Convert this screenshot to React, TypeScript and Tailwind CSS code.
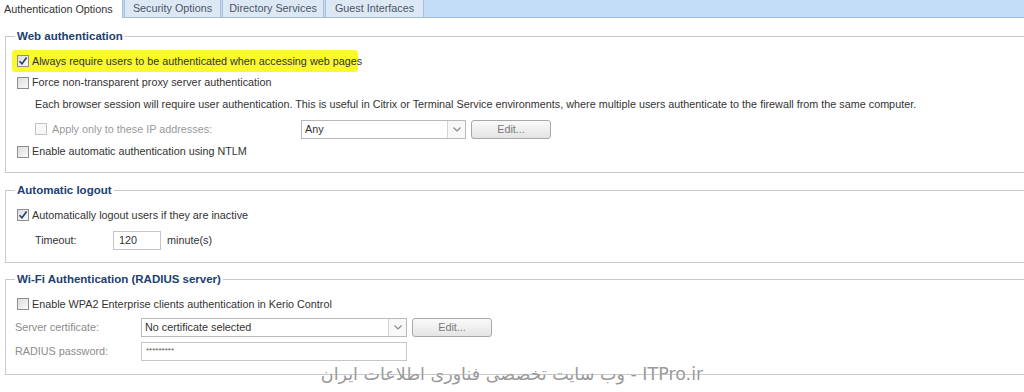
import React from "react";

const font = { fontFamily: '"Liberation Sans", Arial, sans-serif' };

function Check({ checked = false, disabled = false }: { checked?: boolean; disabled?: boolean }) {
  return (
    <span
      className={
        "inline-flex items-center justify-center w-[12px] h-[12px] border shrink-0 " +
        (disabled ? "border-[#c4c4c4] bg-[#f7f7f7]" : "border-[#8e8e8e] bg-gradient-to-br from-[#dcdcdc] to-[#fafafa]")
      }
    >
      {checked && (
        <svg width="10" height="10" viewBox="0 0 10 10">
          <path d="M1.5 5.2 L4 7.8 L8.6 1.6" fill="none" stroke="#2b3f66" strokeWidth="1.6" />
        </svg>
      )}
    </span>
  );
}

function Select({ value, w }: { value: string; w: string }) {
  return (
    <div className={"flex h-[19px] border border-[#b9b9b9] bg-white " + w}>
      <div className="flex-1 flex items-center pl-[3px] text-[#333]">{value}</div>
      <div className="w-[18px] flex items-center justify-center border-l border-[#d4d4d4] bg-[#f8f8f8]">
        <svg width="8" height="5" viewBox="0 0 8 5">
          <path d="M0.5 0.5 L4 4 L7.5 0.5" fill="none" stroke="#8a8a8a" strokeWidth="1.2" />
        </svg>
      </div>
    </div>
  );
}

function EditBtn() {
  return (
    <button className="ml-[5px] h-[19px] w-[80px] rounded-[3px] border border-[#a8a8a8] bg-gradient-to-b from-[#fafafa] to-[#e4e4e4] text-[#7a7a7a]">
      Edit...
    </button>
  );
}

function Legend({ children }: { children: React.ReactNode }) {
  return (
    <legend className="ml-[9px] px-[2px] text-[11.5px] font-bold text-[#20406f] leading-[14px]">{children}</legend>
  );
}

export default function App() {
  const tabs = [
    { t: "Security Options", w: "w-[97px]" },
    { t: "Directory Services", w: "w-[102px]" },
    { t: "Guest Interfaces", w: "w-[99px]" },
  ];
  return (
    <div className="relative w-[1024px] h-[392px] overflow-hidden bg-white text-[10.8px] text-[#333]" style={font}>
      {/* Tab strip */}
      <div className="flex h-[18px] bg-[#c3ddf9] border-b border-[#a5bcd6] whitespace-nowrap">
        <div className="w-[123px] h-[18px] bg-white flex items-center pl-[4px] text-[#333] border-r border-[#a9c0dc]">
          Authentication Options
        </div>
        {tabs.map((x) => (
          <div
            key={x.t}
            className={
              "h-[17px] ml-[1px] bg-[#dde8f5] border-r border-l border-[#a9c0dc] flex items-center justify-center text-[#4b5665] " +
              x.w
            }
          >
            {x.t}
          </div>
        ))}
      </div>

      <div className="pl-[5px] pt-[11px] whitespace-nowrap">
        {/* Web authentication */}
        <fieldset className="w-[1030px] border border-[#c9c9c9] pb-[11px]">
          <Legend>Web authentication</Legend>
          <div className="pt-[7px]">
            <div className="h-[22px] flex items-center pl-[6px]">
              <div className="flex items-center gap-[3px] h-[22px] w-[346px] pl-[5px] bg-[#f9f92e] rounded-[3px]">
                <Check checked />
                <span>Always require users to be authenticated when accessing web pages</span>
              </div>
            </div>
            <div className="h-[21px] flex items-center gap-[3px] pl-[11px]">
              <Check />
              <span>Force non-transparent proxy server authentication</span>
            </div>
            <div className="h-[23px] flex items-center pl-[29px]">
              Each browser session will require user authentication. This is useful in Citrix or Terminal Service
              environments, where multiple users authenticate to the firewall from the same computer.
            </div>
            <div className="h-[26px] flex items-center pl-[29px]">
              <div className="flex items-center gap-[5px] w-[266px] text-[#9a9a9a]">
                <Check disabled />
                <span>Apply only to these IP addresses:</span>
              </div>
              <Select value="Any" w="w-[165px]" />
              <EditBtn />
            </div>
            <div className="h-[19px] flex items-center gap-[3px] pl-[11px]">
              <Check />
              <span>Enable automatic authentication using NTLM</span>
            </div>
          </div>
        </fieldset>

        {/* Automatic logout */}
        <fieldset className="mt-[10px] w-[1030px] border border-[#c9c9c9] pb-[11px]">
          <Legend>Automatic logout</Legend>
          <div className="pt-[7px]">
            <div className="h-[22px] flex items-center gap-[3px] pl-[11px]">
              <Check checked />
              <span>Automatically logout users if they are inactive</span>
            </div>
            <div className="mt-[3px] h-[22px] flex items-center pl-[29px]">
              <span className="w-[78px]">Timeout:</span>
              <div className="w-[48px] h-[19px] border border-[#c6c6c6] flex items-center pl-[5px]">120</div>
              <span className="ml-[6px]">minute(s)</span>
            </div>
          </div>
        </fieldset>

        {/* Wi-Fi */}
        <fieldset className="mt-[9px] w-[1030px] border border-[#c9c9c9] pb-[12px]">
          <Legend>Wi-Fi Authentication (RADIUS server)</Legend>
          <div className="pt-[7px]">
            <div className="h-[22px] flex items-center gap-[3px] pl-[11px]">
              <Check />
              <span>Enable WPA2 Enterprise clients authentication in Kerio Control</span>
            </div>
            <div className="mt-[1px] h-[22px] flex items-center pl-[9px]">
              <span className="w-[126px] text-[#8c8c8c]">Server certificate:</span>
              <Select value="No certificate selected" w="w-[266px]" />
              <EditBtn />
            </div>
            <div className="mt-[2px] h-[22px] flex items-center pl-[9px]">
              <span className="w-[126px] text-[#8c8c8c]">RADIUS password:</span>
              <div className="w-[266px] h-[19px] border border-[#c6c6c6] flex items-center pl-[4px] text-[8px] text-[#555]">
                *********
              </div>
            </div>
          </div>
        </fieldset>
      </div>

      {/* watermark */}
      <div
        dir="rtl"
        className="absolute left-[312px] top-[362px] w-[400px] text-center text-[17.5px] leading-[24px] text-[#9a9a9a] whitespace-nowrap"
        style={{ fontFamily: '"DejaVu Sans", sans-serif', textShadow: "0 0 1px #fff" }}
      >
        ITPro.ir - وب سایت تخصصی فناوری اطلاعات ایران
      </div>
    </div>
  );
}
